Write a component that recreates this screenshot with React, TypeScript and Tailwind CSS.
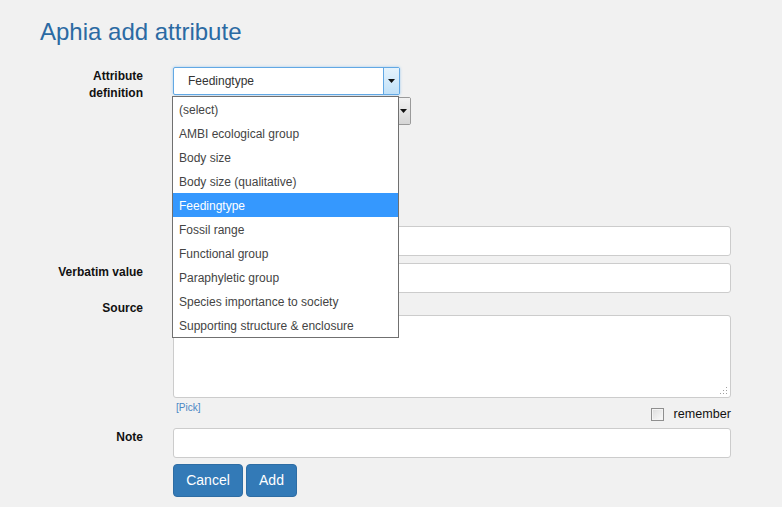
import React from "react";

const options = [
  "(select)",
  "AMBI ecological group",
  "Body size",
  "Body size (qualitative)",
  "Feedingtype",
  "Fossil range",
  "Functional group",
  "Paraphyletic group",
  "Species importance to society",
  "Supporting structure & enclosure",
];

function Label({ children, className = "" }: { children?: React.ReactNode; className?: string }) {
  return (
    <div className={`w-[103px] shrink-0 text-right text-[12px] font-bold leading-[17px] text-[#111] ${className}`}>
      {children}
    </div>
  );
}

function Arrow() {
  return (
    <svg width="7" height="4" viewBox="0 0 7 4">
      <path d="M0 0h7L3.5 4z" fill="#111" />
    </svg>
  );
}

export default function App() {
  return (
    <div className="min-h-[507px] w-[782px] bg-[#f1f1f1] pl-[40px] font-['Liberation_Sans',Arial,sans-serif]">
      <h1 className="pt-[18px] text-[24px] leading-[28px] text-[#2b6aa3]">Aphia add attribute</h1>

      {/* attribute definition */}
      <div className="mt-[21px] flex gap-[30px]">
        <Label className="pt-[1px]">
          Attribute
          <br />
          definition
        </Label>
        <div className="relative">
          <div className="flex h-[28px] w-[227px] items-center rounded-[2px] border border-[#62a8e4] bg-white pl-[14px] text-[12px] text-[#333] shadow-[0_0_3px_#9ecaed]">
            <span className="flex-1">Feedingtype</span>
            <div className="flex h-full w-[16px] items-center justify-center border-l border-[#62a8e4] bg-gradient-to-b from-[#e5f3fd] to-[#c1e1f8]">
              <Arrow />
            </div>
          </div>
          <div className="mt-[2px] flex h-[28px] w-[238px] items-center justify-end rounded-[2px] border border-[#9a9a9a] bg-white">
            <div className="flex h-full w-[14px] items-center justify-center border-l border-[#9a9a9a] bg-gradient-to-b from-[#f2f2f2] to-[#d6d6d6]">
              <Arrow />
            </div>
          </div>

          {/* open dropdown list */}
          <ul className="absolute left-[-1px] top-[29px] z-10 w-[227px] border border-[#707070] bg-white text-[12px] text-[#444]">
            {options.map((o) => (
              <li
                key={o}
                className={`flex h-[24px] items-center pl-[6px] pt-[1px] ${o === "Feedingtype" ? "bg-[#3598fe] text-white" : ""}`}
              >
                {o}
              </li>
            ))}
          </ul>
        </div>
      </div>

      <div className="mt-[101px] flex flex-col gap-[7px]">
        <div className="flex gap-[30px]">
          <Label />
          <div className="h-[30px] w-[558px] rounded-[3px] border border-[#cccccc] bg-white" />
        </div>
        <div className="flex gap-[30px]">
          <Label className="pt-[1px]">Verbatim value</Label>
          <div className="h-[30px] w-[558px] rounded-[3px] border border-[#cccccc] bg-white" />
        </div>
      </div>

      {/* source */}
      <div className="mt-[7px] flex gap-[30px]">
        <Label>Source</Label>
        <div className="w-[558px]">
          <div className="relative mt-[15px] h-[83px] rounded-[3px] border border-[#cccccc] bg-white">
            <svg className="absolute bottom-[2px] right-[2px]" width="8" height="8" viewBox="0 0 8 8">
              <g fill="#a0a0a0">
                <rect x="6" y="0" width="1" height="1" />
                <rect x="3" y="3" width="1" height="1" />
                <rect x="6" y="3" width="1" height="1" />
                <rect x="0" y="6" width="1" height="1" />
                <rect x="3" y="6" width="1" height="1" />
                <rect x="6" y="6" width="1" height="1" />
              </g>
            </svg>
          </div>
          <div className="flex h-[30px] items-start justify-between">
            <a className="mt-[4px] pl-[3px] text-[10px] leading-[12px] text-[#4a87c4]">[Pick]</a>
            <label className="mt-[9px] flex items-center gap-[10px] text-[12.6px] leading-[14px] text-[#111]">
              <span className="h-[13px] w-[13px] border border-[#8f8f8f] bg-gradient-to-br from-[#dcdcdc] to-[#fbfbfb] shadow-[inset_0_0_0_1px_#f4f4f4]" />
              remember
            </label>
          </div>
        </div>
      </div>

      {/* note */}
      <div className="flex gap-[30px]">
        <Label className="pt-[1px]">Note</Label>
        <div className="w-[558px]">
          <div className="h-[30px] rounded-[3px] border border-[#cccccc] bg-white" />
          <div className="mt-[6px] flex gap-[3px]">
            <button className="h-[33px] w-[70px] rounded-[4px] border border-[#2e6da4] bg-[#337ab7] text-[14px] text-white">
              Cancel
            </button>
            <button className="h-[33px] w-[51px] rounded-[4px] border border-[#2e6da4] bg-[#337ab7] text-[14px] text-white">
              Add
            </button>
          </div>
        </div>
      </div>
    </div>
  );
}
